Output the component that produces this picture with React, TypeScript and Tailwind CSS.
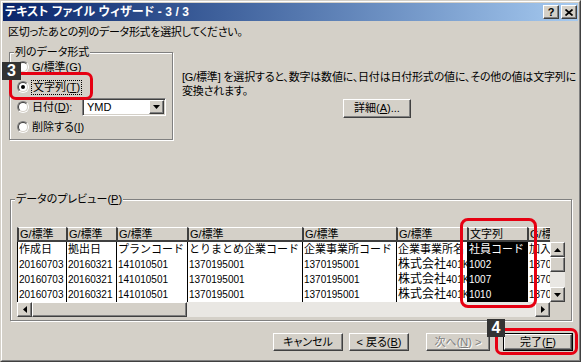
import React from "react";

const raised =
  "bg-[#d4d0c8] border border-t-white border-l-white border-r-[#404040] border-b-[#404040] shadow-[inset_-1px_-1px_0_#808080]";
const sunken =
  "border border-t-[#808080] border-l-[#808080] border-r-white border-b-white shadow-[inset_1px_1px_0_#404040,inset_-1px_-1px_0_#d4d0c8]";
const etched = "border border-[#808080] shadow-[inset_1px_1px_0_#fff,1px_1px_0_#fff]";

function Tri({ dir }: { dir: "up" | "down" | "left" | "right" }) {
  if (dir === "up")
    return (
      <svg width="7" height="4" viewBox="0 0 7 4">
        <polygon points="0,4 7,4 3.5,0" fill="#000" />
      </svg>
    );
  if (dir === "down")
    return (
      <svg width="7" height="4" viewBox="0 0 7 4">
        <polygon points="0,0 7,0 3.5,4" fill="#000" />
      </svg>
    );
  if (dir === "left")
    return (
      <svg width="4" height="7" viewBox="0 0 4 7">
        <polygon points="4,0 4,7 0,3.5" fill="#000" />
      </svg>
    );
  return (
    <svg width="4" height="7" viewBox="0 0 4 7">
      <polygon points="0,0 0,7 4,3.5" fill="#000" />
    </svg>
  );
}

function Radio({ checked }: { checked?: boolean }) {
  return (
    <span className="flex w-3 h-3 shrink-0 rounded-full border border-t-[#808080] border-l-[#808080] border-r-white border-b-white">
      <span className="flex flex-1 items-center justify-center rounded-full border border-t-[#404040] border-l-[#404040] border-r-[#d4d0c8] border-b-[#d4d0c8] bg-white">
        {checked && <span className="w-1 h-1 rounded-full bg-black" />}
      </span>
    </span>
  );
}

type Col = { w: number; h: string; r0: string; d: React.ReactNode[]; sel?: boolean };

const kk = <><span className="text-[12px]">株式会社</span>401K</>;

const cols: Col[] = [
  { w: 49, h: "G/標準", r0: "作成日", d: ["20160703", "20160703", "20160703"] },
  { w: 50, h: "G/標準", r0: "拠出日", d: ["20160321", "20160321", "20160321"] },
  { w: 71, h: "G/標準", r0: "プランコード", d: ["141010501", "141010501", "141010501"] },
  { w: 115, h: "G/標準", r0: "とりまとめ企業コード", d: ["1370195001", "1370195001", "1370195001"] },
  { w: 94, h: "G/標準", r0: "企業事業所コード", d: ["1370195001", "1370195001", "1370195001"] },
  { w: 71, h: "G/標準", r0: "企業事業所名", d: [kk, kk, kk] },
  { w: 60, h: "文字列", r0: "社員コード", d: ["1002", "1007", "1010"], sel: true },
  { w: 60, h: "G/標準", r0: "加入者番号", d: ["1370195001", "1370195001", "1370195001"] },
];

function Btn({ children, className = "" }: { children: React.ReactNode; className?: string }) {
  return (
    <div className={`${raised} h-[18px] flex items-center justify-center text-[11px] leading-none ${className}`}>
      {children}
    </div>
  );
}

export default function App() {
  return (
    <div className="relative w-[583px] h-[362px] overflow-hidden bg-white font-['Liberation_Sans','Noto_Sans_CJK_JP',sans-serif] [font-feature-settings:'palt'] text-black">
      {/* window */}
      <div className="w-[581px] h-[362px] bg-[#d4d0c8] border border-t-[#d4d0c8] border-l-[#d4d0c8] border-r-[#404040] border-b-[#404040]">
        <div className="flex flex-col h-full border border-t-white border-l-white border-r-[#808080] border-b-[#808080] p-[1px]">
          {/* title bar */}
          <div className="h-[18px] flex items-center justify-between bg-gradient-to-r from-[#0a246a] to-[#a6caf0]">
            <span className="pl-[2px] text-white font-bold text-[12px] leading-none whitespace-nowrap tracking-[0.1px]">
              テキスト ファイル ウィザード - 3 / 3
            </span>
            <div className="flex items-center gap-[2px] pr-[1px]">
              <div className={`${raised} w-4 h-[14px] flex items-center justify-center text-[11px] font-bold leading-none`}>
                ?
              </div>
              <div className={`${raised} w-4 h-[14px] flex items-center justify-center`}>
                <svg width="8" height="7" viewBox="0 0 8 7">
                  <path d="M0.5 0.5L7.5 6.5M7.5 0.5L0.5 6.5" stroke="#000" strokeWidth="1.7" />
                </svg>
              </div>
            </div>
          </div>

          {/* body */}
          <div className="flex flex-col text-[11px]">
            <div className="mt-[4px] ml-[5px] leading-[14px] whitespace-nowrap tracking-[-0.3px]">
              区切ったあとの列のデータ形式を選択してください。
            </div>

            <div className="flex items-start mt-[13px]">
              {/* group 1 */}
              <div className={`relative ml-[6px] w-[164px] h-[88px] ${etched} pl-[7px] pt-[4px] flex flex-col`}>
                <span className="absolute left-[4px] top-[-7px] bg-[#d4d0c8] px-[1px] leading-[12px] whitespace-nowrap">
                  列のデータ形式
                </span>
                <div className="flex items-center h-5 gap-[3px]">
                  <Radio />
                  <span className="whitespace-nowrap">
                    G/標準(<u>G</u>)
                  </span>
                </div>
                <div className="flex items-center h-5 gap-[2px]">
                  <Radio checked />
                  <span className="whitespace-nowrap border border-dotted border-black px-[1px] leading-[13px]">
                    文字列(<u>T</u>)
                  </span>
                </div>
                <div className="flex items-center h-5 gap-[3px]">
                  <Radio />
                  <span className="whitespace-nowrap w-[47px]">
                    日付(<u>D</u>):
                  </span>
                  <div className={`${sunken} bg-white w-[84px] h-[18px] flex items-center justify-between p-[1px]`}>
                    <span className="pl-[3px] text-[11px]">YMD</span>
                    <div className={`${raised} w-[15px] h-[14px] flex items-center justify-center`}>
                      <Tri dir="down" />
                    </div>
                  </div>
                </div>
                <div className="flex items-center h-5 gap-[3px]">
                  <Radio />
                  <span className="whitespace-nowrap">
                    削除する(<u>I</u>)
                  </span>
                </div>
              </div>

              {/* explanation */}
              <div className="ml-[9px] mt-[18px] flex flex-col">
                <div className="leading-[14px] whitespace-nowrap tracking-[-0.2px]">
                  [G/標準] を選択すると、数字は数値に、日付は日付形式の値に、その他の値は文字列に
                </div>
                <div className="leading-[14px] whitespace-nowrap tracking-[-0.2px]">変換されます。</div>
                <Btn className="ml-[161px] mt-[1px] w-[68px] h-[19px]">
                  詳細(<u>A</u>)...
                </Btn>
              </div>
            </div>

            {/* group 2 */}
            <div className={`relative mt-[59px] ml-[7px] w-[562px] h-[122px] ${etched} pl-[6px] pt-[27px]`}>
              <span className="absolute left-[4px] top-[-7px] bg-[#d4d0c8] px-[1px] leading-[12px] whitespace-nowrap">
                データのプレビュー(<u>P</u>)
              </span>
              <div className="flex w-[548px] h-[90px]">
                <div className="flex flex-col w-[533px]">
                  <div className="flex h-[75px] w-[533px] overflow-hidden bg-white">
                    {cols.map((c, i) => (
                      <div key={i} className="flex flex-col shrink-0" style={{ width: c.w }}>
                        <div className="h-[15px] flex items-center bg-[#d4d0c8] border-l-2 border-l-[#404040] border-t border-t-white border-b-2 border-b-[#404040] pl-[1px] leading-none whitespace-nowrap overflow-hidden">
                          {c.h}
                        </div>
                        <div
                          className={`flex flex-col flex-1 border-l border-l-black overflow-hidden whitespace-nowrap pl-[1px] ${
                            c.sel ? "bg-black text-white" : "bg-white"
                          }`}
                        >
                          <div className="h-[15px] leading-[15px] text-[11px] [font-feature-settings:normal]">{c.r0}</div>
                          {c.d.map((v, j) => (
                            <div key={j} className="h-[15px] leading-[15px] text-[10px]">
                              {v}
                            </div>
                          ))}
                        </div>
                      </div>
                    ))}
                  </div>
                  {/* horizontal scrollbar */}
                  <div className="flex h-[15px]">
                    <div className={`${raised} w-[15px] flex items-center justify-center`}>
                      <Tri dir="left" />
                    </div>
                    <div className={`${raised} w-[155px]`} />
                    <div className="flex-1 bg-[#e9e7e3]" />
                    <div className={`${raised} w-[15px] flex items-center justify-center`}>
                      <Tri dir="right" />
                    </div>
                  </div>
                </div>
                {/* vertical scrollbar */}
                <div className="flex flex-col w-[15px]">
                  <div className="h-[15px]" />
                  <div className={`${raised} h-[15px] flex items-center justify-center`}>
                    <Tri dir="up" />
                  </div>
                  <div className={`${raised} h-[15px]`} />
                  <div className="h-[15px] bg-[#e9e7e3]" />
                  <div className={`${raised} h-[15px] flex items-center justify-center`}>
                    <Tri dir="down" />
                  </div>
                  <div className="h-[15px]" />
                </div>
              </div>
            </div>

            {/* buttons */}
            <div className="flex mt-[12px] pl-[270px]">
              <Btn className="w-[70px]">キャンセル</Btn>
              <Btn className="ml-[6px] w-[60px]">
                &lt; 戻る(<u>B</u>)
              </Btn>
              <Btn className="ml-[17px] w-[64px] text-[#808080] [text-shadow:1px_1px_0_#fff]">
                次へ(<u>N</u>) &gt;
              </Btn>
              <div className="ml-[13px] w-[70px] h-[18px] border border-black flex">
                <div className="flex-1 bg-[#d4d0c8] border border-t-white border-l-white border-r-[#404040] border-b-[#404040] shadow-[inset_-1px_-1px_0_#808080] flex items-center justify-center text-[11px] leading-none">
                  完了(<u>F</u>)
                </div>
              </div>
            </div>
          </div>
        </div>
      </div>

      {/* annotations */}
      <div className="absolute left-[9px] top-[72px] w-[84px] h-[28px] border-[3px] border-[#e60012] rounded-[7px]" />
      <div className="absolute left-[460px] top-[218px] w-[77px] h-[90px] border-[3px] border-[#e60012] rounded-[8px]" />
      <div className="absolute left-[495px] top-[328px] w-[83px] h-[27px] border-[3px] border-[#e60012] rounded-[7px]" />
      <div className="absolute left-[2px] top-[62px] w-[19px] h-[18px] bg-[#333] text-white font-bold text-[16px] leading-none flex items-center justify-center">
        3
      </div>
      <div className="absolute left-[487px] top-[319px] w-[18px] h-[18px] bg-[#333] text-white font-bold text-[16px] leading-none flex items-center justify-center">
        4
      </div>
    </div>
  );
}
